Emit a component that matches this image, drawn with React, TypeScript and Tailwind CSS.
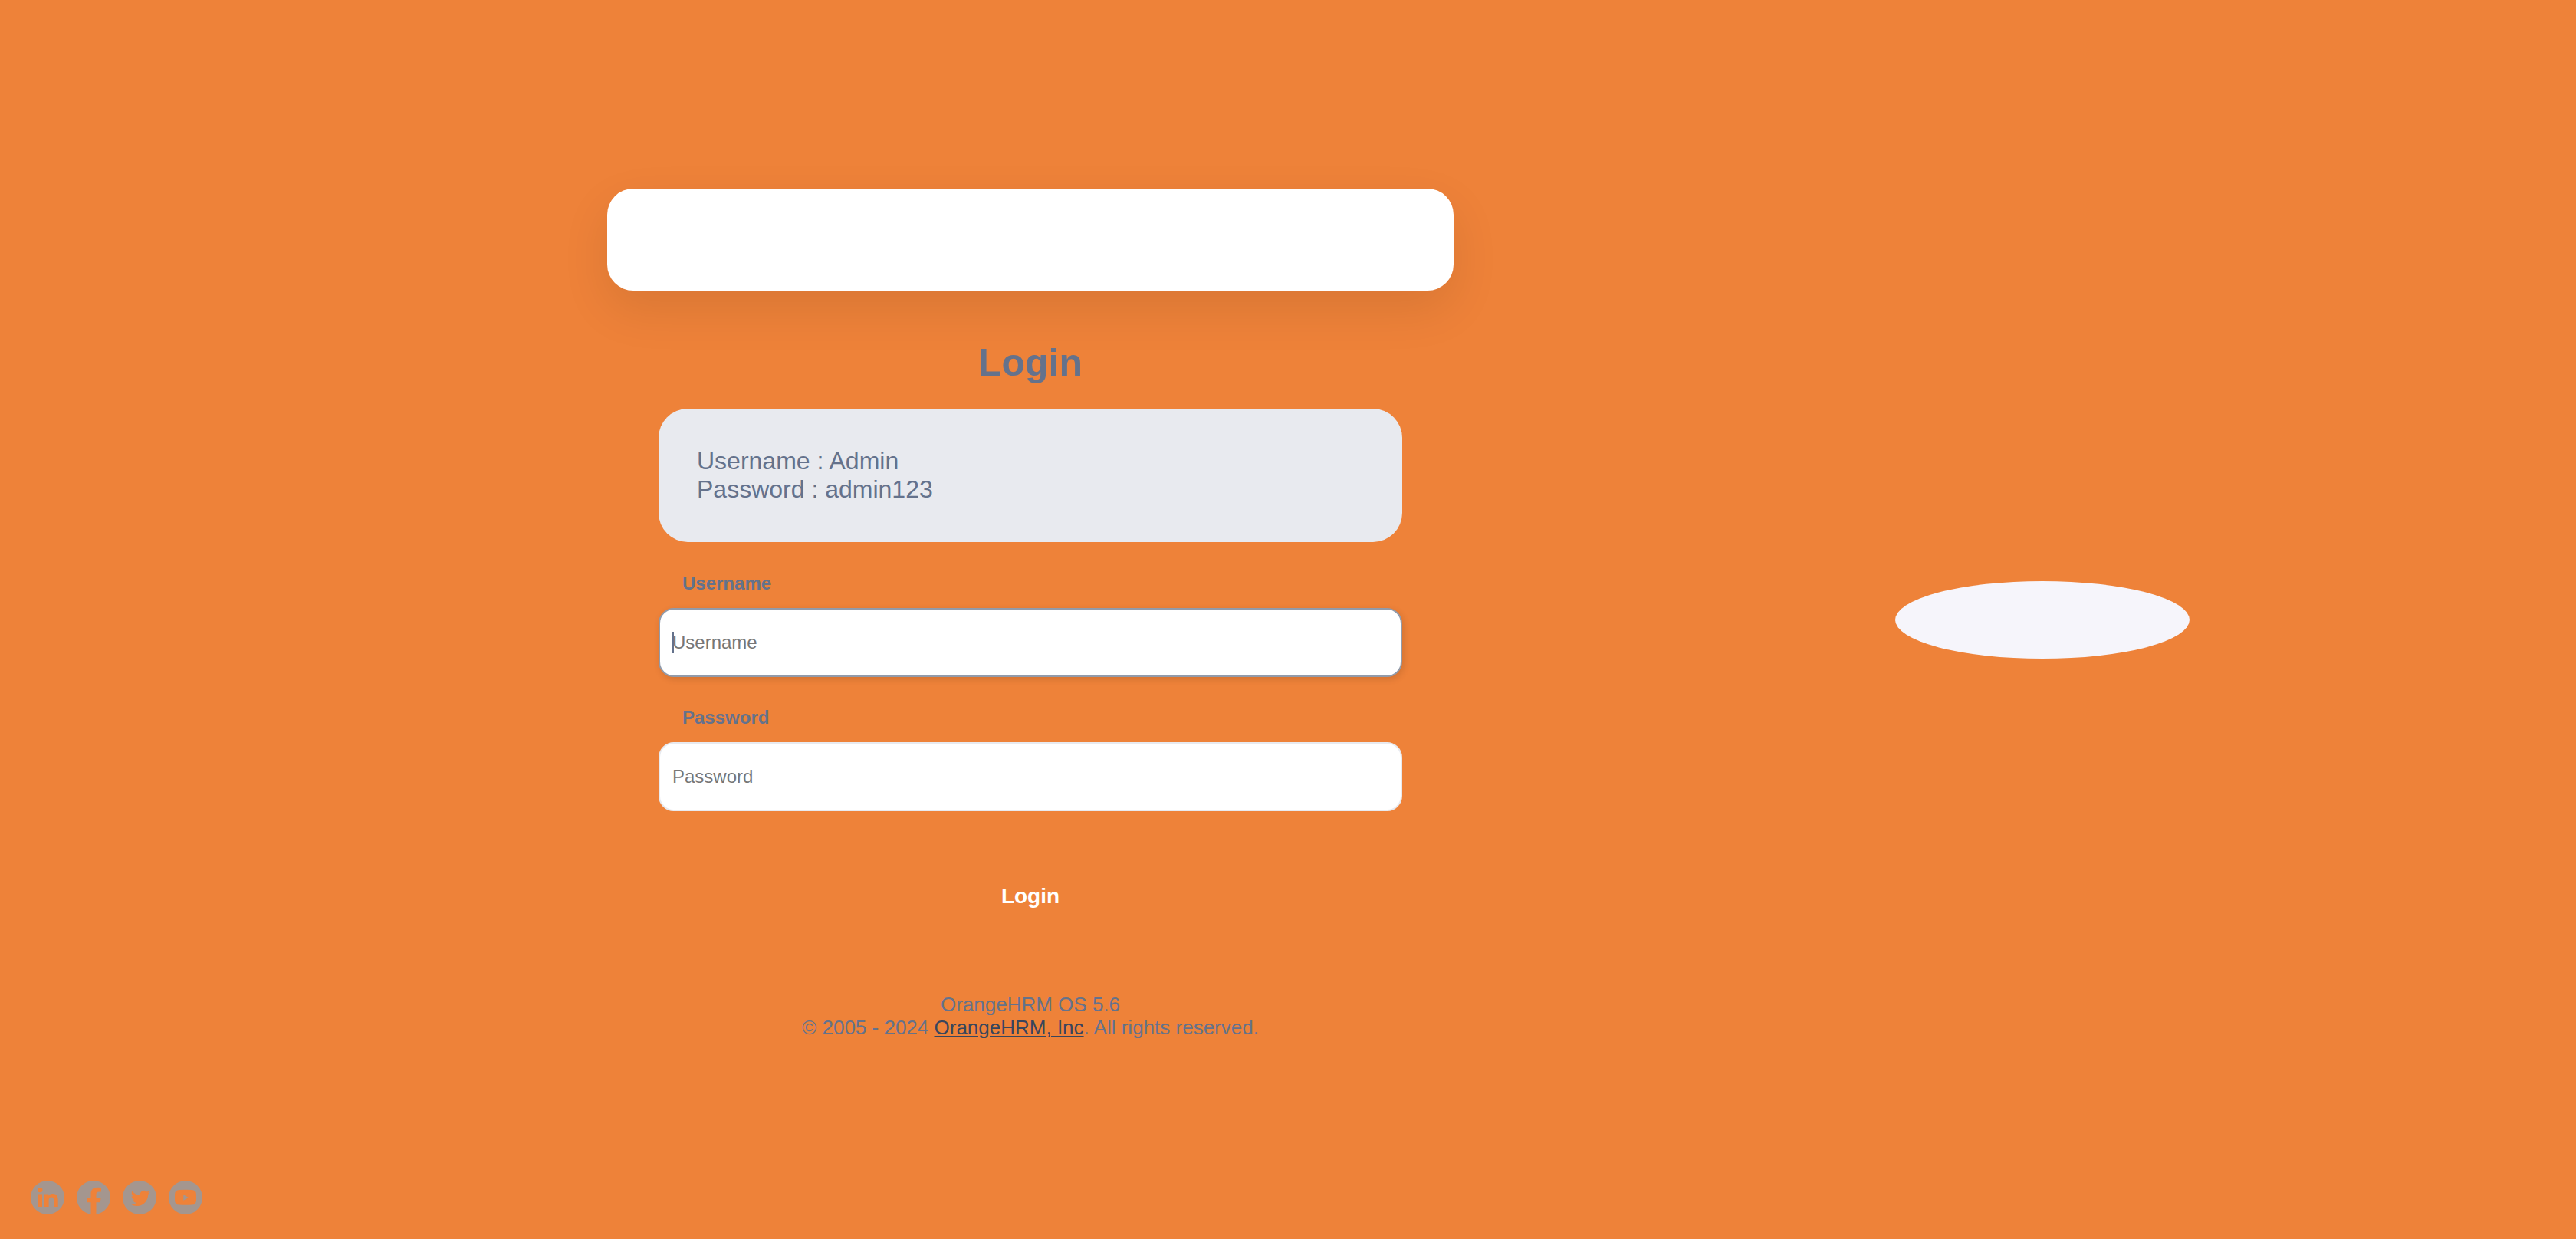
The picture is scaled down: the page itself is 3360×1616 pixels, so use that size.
import { useId } from "react";

const DISC = "M22 0a22 22 0 1 0 0 44a22 22 0 1 0 0-44Z";

const socials = [
  {
    name: "LinkedIn",
    path: DISC + "M12.300 8.900a3.200 3.200 0 1 1 0 6.400a3.200 3.200 0 1 1 0-6.400ZM9.600 17.400h5.400v16.600H9.600ZM18 17.400h5.200v2.400c1-1.700 3-2.800 5.400-2.800c5.300 0 7.100 3.200 7.100 8.400v8.600h-5.600v-8.200c0-2.400-.5-4.300-3-4.300s-3.500 1.700-3.500 4.300v8.200H18Z",
  },
  {
    name: "Facebook",
    path: "M18.500 43.700v-15.500h-5.400v-6.200h5.400v-4.600c0-5.600 3-8.700 8.400-8.700c2.400 0 5.100.4 5.100.4v5.300h-2.900c-2.700 0-3.600 1.500-3.600 3.300v4.300h6.200l-1 6.200h-5.200v15.500A22 22 0 1 0 18.500 43.700Z",
  },
  {
    name: "Twitter",
    path: DISC,
    bird: "M23.953 4.570a10 10 0 0 1-2.825.775 4.958 4.958 0 0 0 2.163-2.723c-.951.555-2.005.959-3.127 1.184a4.920 4.920 0 0 0-8.384 4.482C7.690 8.095 4.067 6.130 1.640 3.162a4.822 4.822 0 0 0-.666 2.475c0 1.710.870 3.213 2.188 4.096a4.904 4.904 0 0 1-2.228-.616v.060a4.923 4.923 0 0 0 3.946 4.827 4.996 4.996 0 0 1-2.212.085 4.936 4.936 0 0 0 4.604 3.417 9.867 9.867 0 0 1-6.102 2.105c-.390 0-.779-.023-1.170-.067a13.995 13.995 0 0 0 7.557 2.209c9.053 0 13.998-7.496 13.998-13.985 0-.210 0-.420-.015-.630A9.935 9.935 0 0 0 24 4.590z",
  },
  {
    name: "YouTube",
    path: DISC + "M14 12q8-.5 16 0q6 0 6 6v7.500q0 6-6 6q-8 .5-16 0q-6 0-6-6V18q0-6 6-6ZM19.300 18.200v7.600l6.700-3.800Z",
  },
];

function Field({ label, type, autoFocus }: { label: string; type: string; autoFocus?: boolean }) {
  const id = useId();
  return (
    <div className="flex flex-col">
      <label htmlFor={id} className="mb-4 px-[31px] text-2xl font-bold">
        {label}
      </label>
      <div className="relative">
        <input
          id={id}
          type={type}
          placeholder={label}
          className={
            autoFocus
              ? "block h-[90px] w-full rounded-[20px] border-2 border-[#929baa] bg-white px-4 text-2xl shadow-[2px_3px_10px_rgba(0,0,0,0.12)] outline-none placeholder:text-[#777777]"
              : "block h-[90px] w-full rounded-[20px] border-2 border-[#e8eaef] bg-white px-4 text-2xl outline-none placeholder:text-[#777777]"
          }
        />
        {autoFocus && <span className="absolute top-[31px] left-[18px] h-7 w-0.5 bg-[#64728c]" />}
      </div>
    </div>
  );
}

export default function App() {
  return (
    <div className="flex min-h-screen flex-col bg-[#ee8239] font-['Liberation_Sans',Arial,sans-serif] text-[#64728c]">
      <main className="grid flex-1 grid-cols-[30fr_52fr_58fr]">
        <section className="col-start-2 flex flex-col px-[72px] pt-[246px]">
          <div className="h-[133px] rounded-[34px] bg-white shadow-[0_24px_64px_rgba(0,0,0,0.09)]" />
          <div className="flex flex-col px-[67px]">
            <h1 className="mt-[62px] text-center text-[50px] leading-[64px] font-bold">Login</h1>
            <div className="mt-7 rounded-[38px] bg-[#e8eaef] p-[50px] text-[32px] leading-[37px]">
              <p>Username : Admin</p>
              <p>Password : admin123</p>
            </div>
            <form className="mt-[38px] flex flex-col gap-[37px]" onSubmit={(e) => e.preventDefault()}>
              <Field label="Username" type="text" autoFocus />
              <Field label="Password" type="password" />
              <button type="submit" className="mt-7 h-[92px] rounded-full text-[28px] font-bold text-white">
                Login
              </button>
            </form>
          </div>
          <footer className="mt-20 text-center text-[26px] leading-[30px]">
            <p>OrangeHRM OS 5.6</p>
            <p>
              © 2005 - 2024{" "}
              <a href="#" className="text-[#38455d] underline">
                OrangeHRM, Inc
              </a>
              . All rights reserved.
            </p>
          </footer>
        </section>
        <aside className="flex justify-center pt-[758px]">
          <div className="h-[101px] w-[384px] rounded-[50%] bg-[#f6f5fb]" />
        </aside>
      </main>
      <nav aria-label="Social media" className="flex gap-4 px-10 pb-8">
        {socials.map((s) => (
          <a key={s.name} href="#" aria-label={s.name} className="text-[#a4968f]">
            <svg viewBox="0 0 44 44" className="size-11" fill="currentColor" fillRule="evenodd">
              <path d={s.path} />
              {s.bird && <path d={s.bird} fill="#ee8239" transform="translate(10.7 10.5) scale(1.04)" />}
            </svg>
          </a>
        ))}
      </nav>
    </div>
  );
}
